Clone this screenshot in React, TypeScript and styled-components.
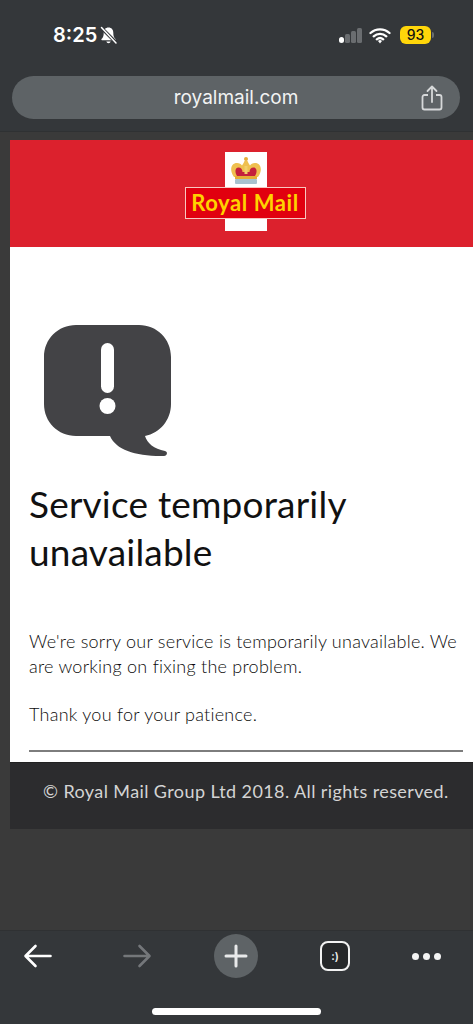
import React from "react";
import styled, { createGlobalStyle } from "styled-components";

const GlobalStyle = createGlobalStyle`
  html, body {
    margin: 0;
    padding: 0;
    background: #3a3a3a;
  }
`;

function App() {
  return (
    <Phone>
      <GlobalStyle />
      <TopBar>
        <StatusRow>
          <TimeGroup>
            <Time>8:25</Time>
            <svg width="19" height="19" viewBox="0 0 19 19">
              <path d="M9.5 1.5c-3 0-4.8 2.2-4.8 5.2 0 3.3-.6 4.7-2.2 6.4-.4.5-.1 1.2.5 1.2h13c.6 0 .9-.7.5-1.2-1.6-1.7-2.2-3.1-2.2-6.4 0-3-1.800-5.200-4.800-5.200z" fill="#fff" />
              <path d="M7.300 15.500a2.300 2.300 0 0 0 4.400 0z" fill="#fff" />
              <path d="M2 1.500 17.500 17" stroke="#34373a" strokeWidth="3.400" />
              <path d="M2.500 1.500 17 17" stroke="#fff" strokeWidth="1.500" strokeLinecap="round" />
            </svg>
          </TimeGroup>
          <StatusIcons>
            <SignalIcon width="24" height="16" viewBox="0 0 24 16">
              <rect x="1" y="10" width="5" height="6" rx="2.500" fill="#fff" />
              <rect x="7" y="7" width="5" height="9" rx="1.500" fill="#6a6d70" />
              <rect x="13" y="4" width="5" height="12" rx="1.500" fill="#6a6d70" />
              <rect x="19" y="1" width="5" height="15" rx="1.500" fill="#6a6d70" />
            </SignalIcon>
            <svg width="22" height="17" viewBox="0 0 22 17">
              <path d="M1.500 6a14 14 0 0 1 19 0M4.700 9.300a9.500 9.500 0 0 1 12.600 0M7.800 12.300a5 5 0 0 1 6.400 0" fill="none" stroke="#fff" strokeWidth="2.300" strokeLinecap="round" />
              <path d="M9 14l2 2.500 2-2.500a3 3 0 0 0-4 0z" fill="#fff" />
            </svg>
            <Battery>
              <BatteryBody>93</BatteryBody>
              <BatteryCap />
            </Battery>
          </StatusIcons>
        </StatusRow>
        <UrlPill>
          <UrlText>royalmail.com</UrlText>
          <ShareIcon width="22" height="26" viewBox="0 0 22 26">
            <path d="M7 10H3.500A2 2 0 0 0 1.500 12v10.500a2 2 0 0 0 2 2h15a2 2 0 0 0 2-2V12a2 2 0 0 0-2-2H15" fill="none" stroke="#d6d8d9" strokeWidth="1.800" />
            <path d="M11 17V2M6.500 6 11 1.500 15.500 6" fill="none" stroke="#d6d8d9" strokeWidth="1.800" strokeLinecap="round" strokeLinejoin="round" />
          </ShareIcon>
        </UrlPill>
      </TopBar>

      <Page>
        <RedHeader>
          <LogoCross>
            <svg width="30" height="28" viewBox="0 0 30 28">
              <path d="M3 20C-2 13 0 6 6 6c2.500 0 4 1 5 2.500 1-1.500 2-3 2.500-4.500h3c.5 1.500 1.500 3 2.500 4.500C20 7 21.500 6 24 6c6 0 8 7 3 14z" fill="#efc050" />
              <path d="M6 19c-2.500-4-2-8.500 1.500-8.500 2.500 0 4 2 4 4.500h7c0-2.500 1.500-4.500 4-4.500 3.500 0 4 4.500 1.500 8.500z" fill="#c4203c" />
              <path d="M13.500 9h3v8h-3z" fill="#f2cf6a" />
              <circle cx="15" cy="2" r="2" fill="#e6ad38" />
              <rect x="4" y="22" width="22" height="5" rx="1" fill="#a8c2cf" />
              <rect x="4" y="19" width="22" height="3" fill="#e6ad38" />
            </svg>
            <LogoPlate>Royal Mail</LogoPlate>
          </LogoCross>
        </RedHeader>

        <Content>
          <svg width="127" height="132" viewBox="0 0 127 132">
            <path d="M32 0h63c18 0 32 14 32 32v47c0 16-11 29-26 32 2 7 9 13 20 15 3 .6 2.500 5-1 5-28 .5-48-6-54-20H32c-18 0-32-14-32-32V32C0 14 14 0 32 0z" fill="#434346" />
            <rect x="57" y="18" width="13" height="50" rx="6.500" fill="#fff" />
            <circle cx="63.500" cy="81" r="8" fill="#fff" />
          </svg>
          <Title>Service temporarily unavailable</Title>
          <Paragraph>
            We're sorry our service is temporarily unavailable. We are working on fixing the problem.
          </Paragraph>
          <Paragraph>Thank you for your patience.</Paragraph>
          <Rule />
        </Content>

        <Footer>© Royal Mail Group Ltd 2018. All rights reserved.</Footer>
      </Page>

      <BottomBar>
        <NavRow>
          <BackIcon width="30" height="24" viewBox="0 0 30 24">
            <path d="M27.500 12H3M12.500 2 2.500 12l10 10" fill="none" stroke="#fff" strokeWidth="2.600" strokeLinecap="round" strokeLinejoin="round" />
          </BackIcon>
          <svg width="30" height="24" viewBox="0 0 30 24">
            <path d="M2.500 12H27M17.500 2l10 10-10 10" fill="none" stroke="#74777a" strokeWidth="2.600" strokeLinecap="round" strokeLinejoin="round" />
          </svg>
          <PlusButton>
            <svg width="24" height="24" viewBox="0 0 24 24">
              <path d="M12 2v20M2 12h20" stroke="#e8e9ea" strokeWidth="3" strokeLinecap="round" />
            </svg>
          </PlusButton>
          <TabButton>:)</TabButton>
          <Dots>
            <Dot />
            <Dot />
            <Dot />
          </Dots>
        </NavRow>
        <HomeIndicator />
      </BottomBar>
    </Phone>
  );
}

export default App;

const Phone = styled.div`
  width: 473px;
  height: 1024px;
  display: flex;
  flex-direction: column;
  overflow: hidden;
  background: #3a3a3a;
`;

const TopBar = styled.div`
  height: 132px;
  box-sizing: border-box;
  background: #34373a;
  border-bottom: 1px solid #2f3133;
  padding: 20px 12px 0;
`;

const StatusRow = styled.div`
  height: 30px;
  display: flex;
  align-items: center;
  justify-content: space-between;
  padding: 0 27px 0 41px;
`;

const TimeGroup = styled.div`
  display: flex;
  align-items: center;
  gap: 2px;
`;

const Time = styled.span`
  font-family: "Inter", sans-serif;
  font-size: 20px;
  font-weight: 600;
  color: #fff;
`;

const StatusIcons = styled.div`
  display: flex;
  align-items: center;
  gap: 9px;
`;

const SignalIcon = styled.svg`
  margin-right: -2px;
`;

const Battery = styled.div`
  display: flex;
  align-items: center;
  gap: 1px;
`;

const BatteryBody = styled.div`
  width: 31px;
  height: 18px;
  border-radius: 6px;
  background: #ffd60a;
  color: #111;
  font-family: "Inter", sans-serif;
  font-size: 14px;
  font-weight: 500;
  line-height: 18px;
  text-align: center;
`;

const BatteryCap = styled.div`
  width: 2px;
  height: 6px;
  border-radius: 0 2px 2px 0;
  background: #6a6d70;
`;

const UrlPill = styled.div`
  position: relative;
  margin-top: 26px;
  width: 448px;
  height: 43px;
  border-radius: 22px;
  background: #5e6366;
  display: flex;
  align-items: center;
  justify-content: center;
`;

const UrlText = styled.span`
  font-family: "Inter", sans-serif;
  font-size: 19px;
  color: #f2f3f3;
`;

const ShareIcon = styled.svg`
  position: absolute;
  right: 17px;
  top: 9px;
`;

const Page = styled.div`
  margin: 8px 0 0 10px;
  display: flex;
  flex-direction: column;
`;

const RedHeader = styled.div`
  height: 107px;
  background: #dc212d;
  display: flex;
  justify-content: center;
  padding-top: 12px;
  box-sizing: border-box;
`;

const LogoCross = styled.div`
  width: 42px;
  height: 79px;
  margin-left: 9px;
  background: #fff;
  display: flex;
  flex-direction: column;
  align-items: center;
  padding-top: 5px;
  box-sizing: border-box;
`;

const LogoPlate = styled.div`
  flex: none;
  width: 121px;
  height: 32px;
  margin: 2px 0 0 -2px;
  box-sizing: border-box;
  background: #e1000f;
  border: 1px solid #f8c6c0;
  color: #ffd200;
  font-family: "Lato", sans-serif;
  font-size: 22px;
  font-weight: 700;
  letter-spacing: 0.6px;
  line-height: 30px;
  text-align: center;
  white-space: nowrap;
`;

const Content = styled.div`
  height: 516px;
  box-sizing: border-box;
  background: #fff;
  padding: 78px 10px 0 19px;
  display: flex;
  flex-direction: column;
  align-items: flex-start;
  border-bottom: 1px solid #222;
  svg {
    margin-left: 15px;
  }
`;

const Title = styled.h1`
  margin: 23px 0 0;
  font-family: "Lato", sans-serif;
  font-size: 37px;
  font-weight: 400;
  letter-spacing: 0.2px;
  line-height: 48px;
  color: #111;
  max-width: 340px;
`;

const Paragraph = styled.p`
  margin: 0 0 23px;
  font-family: "Lato", sans-serif;
  font-size: 18px;
  font-weight: 300;
  letter-spacing: 0.25px;
  line-height: 25px;
  color: #0c0c0c;
  &:first-of-type {
    margin-top: 53px;
  }
`;

const Rule = styled.div`
  align-self: stretch;
  height: 2px;
  margin-top: 0;
  background: #7d7d7d;
`;

const Footer = styled.div`
  height: 66px;
  box-sizing: border-box;
  background: #2c2c2e;
  padding: 16px 0 0 33px;
  font-family: "Lato", sans-serif;
  font-size: 18px;
  letter-spacing: 0.4px;
  line-height: 24px;
  color: #d4d4d4;
  white-space: nowrap;
`;

const BottomBar = styled.div`
  margin-top: auto;
  height: 94px;
  box-sizing: border-box;
  background: #34373a;
  border-top: 1px solid #2f3133;
  padding-top: 3px;
  display: flex;
  flex-direction: column;
  align-items: center;
`;

const NavRow = styled.div`
  width: 100%;
  height: 44px;
  box-sizing: border-box;
  padding-left: 23px;
  display: flex;
  align-items: center;
  gap: 62px;
`;

const BackIcon = styled.svg`
  margin-right: 7px;
`;

const PlusButton = styled.div`
  width: 44px;
  height: 44px;
  border-radius: 50%;
  background: #5e6366;
  display: flex;
  align-items: center;
  justify-content: center;
`;

const TabButton = styled.div`
  width: 30px;
  height: 30px;
  box-sizing: border-box;
  border: 2px solid #f2f2f2;
  border-radius: 8px;
  background: #26282a;
  color: #f2f2f2;
  font-family: "Inter", sans-serif;
  font-size: 11px;
  font-weight: 600;
  line-height: 26px;
  text-align: center;
`;

const Dots = styled.div`
  display: flex;
  gap: 4px;
`;

const Dot = styled.div`
  width: 7px;
  height: 7px;
  border-radius: 50%;
  background: #f4f4f4;
`;

const HomeIndicator = styled.div`
  width: 169px;
  height: 7px;
  margin-top: 30px;
  border-radius: 4px;
  background: #fff;
`;
